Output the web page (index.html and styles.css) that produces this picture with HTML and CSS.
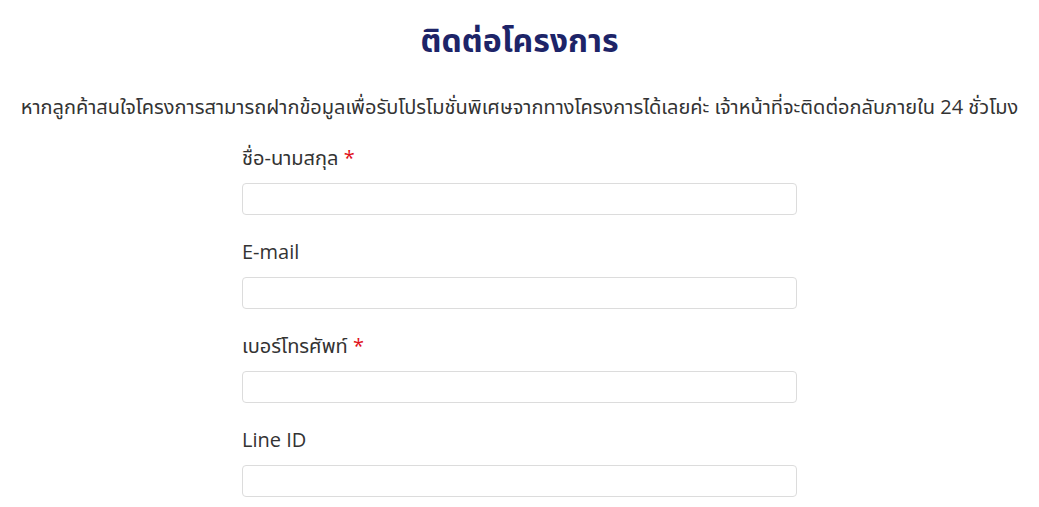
FILE: index.html
```html
<!DOCTYPE html>
<html lang="th">
<head>
<meta charset="utf-8">
<link rel="stylesheet" href="styles.css">
</head>
<body>
<main class="page">
  <h1 class="title">ติดต่อโครงการ</h1>
  <p class="lead">หากลูกค้าสนใจโครงการสามารถฝากข้อมูลเพื่อรับโปรโมชั่นพิเศษจากทางโครงการได้เลยค่ะ เจ้าหน้าที่จะติดต่อกลับภายใน 24 ชั่วโมง</p>
  <form class="form">
    <div class="field">
      <label class="label">ชื่อ-นามสกุล <span class="req">*</span></label>
      <input class="input" type="text">
    </div>
    <div class="field">
      <label class="label">E-mail</label>
      <input class="input" type="text">
    </div>
    <div class="field">
      <label class="label">เบอร์โทรศัพท์ <span class="req">*</span></label>
      <input class="input" type="text">
    </div>
    <div class="field">
      <label class="label">Line ID</label>
      <input class="input" type="text">
    </div>
  </form>
</main>
</body>
</html>
```
FILE: styles.css
```css
html, body {
  margin: 0;
  padding: 0;
  background: #ffffff;
}
body {
  font-family: "Open Sans", "Noto Sans Thai", "Noto Sans", sans-serif;
  color: #333333;
}
.page {
  display: flex;
  flex-direction: column;
  align-items: center;
  padding-top: 18px;
}
.title {
  margin: 0;
  font-size: 32px;
  line-height: 44px;
  font-weight: 700;
  color: #1d2468;
}
.lead {
  margin: 31px 0 0;
  font-size: 20px;
  line-height: 28px;
  text-align: center;
  white-space: nowrap;
}
.form {
  width: 555px;
  margin-top: 23px;
  display: flex;
  flex-direction: column;
  gap: 23px;
}
.field {
  display: flex;
  flex-direction: column;
}
.label {
  font-size: 20px;
  line-height: 28px;
  margin-bottom: 11px;
}
.req {
  color: #e0101a;
}
.input {
  box-sizing: border-box;
  height: 32px;
  border: 1px solid #dcdcdc;
  border-radius: 4px;
  background: #fff;
  margin: 0;
}
```
